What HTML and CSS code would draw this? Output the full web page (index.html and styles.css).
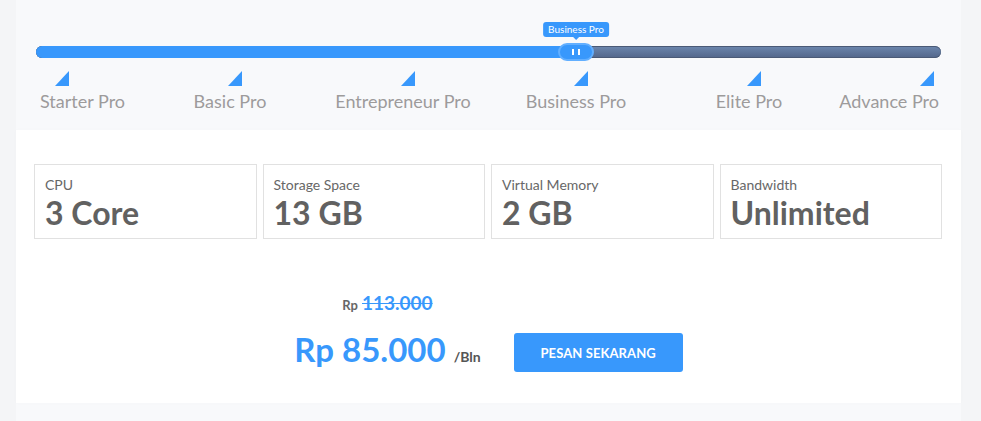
FILE: index.html
```html
<!DOCTYPE html>
<html lang="id">
<head>
<meta charset="utf-8">
<title>Paket Hosting</title>
<link rel="stylesheet" href="styles.css">
</head>
<body>
<div class="wrap">
  <section class="slider">
    <div class="track">
      <div class="fill" style="width: 59.67%"></div>
      <div class="thumb" style="left: 59.67%">
        <div class="tip">Business Pro</div>
        <div class="handle"><i></i><i></i></div>
      </div>
    </div>
    <div class="ticks">
      <span class="tri"></span><span class="tri"></span><span class="tri"></span>
      <span class="tri"></span><span class="tri"></span><span class="tri"></span>
    </div>
    <div class="labels">
      <span class="lbl first"><b>Starter Pro</b></span>
      <span class="lbl"><b>Basic Pro</b></span>
      <span class="lbl"><b>Entrepreneur Pro</b></span>
      <span class="lbl"><b>Business Pro</b></span>
      <span class="lbl"><b>Elite Pro</b></span>
      <span class="lbl last"><b>Advance Pro</b></span>
    </div>
  </section>

  <section class="card">
    <div class="specs">
      <div class="spec"><div class="spec-name">CPU</div><div class="spec-val">3 Core</div></div>
      <div class="spec"><div class="spec-name">Storage Space</div><div class="spec-val">13 GB</div></div>
      <div class="spec"><div class="spec-name">Virtual Memory</div><div class="spec-val">2 GB</div></div>
      <div class="spec"><div class="spec-name">Bandwidth</div><div class="spec-val">Unlimited</div></div>
    </div>
    <div class="order">
      <div class="price">
        <div class="old"><span class="old-cur">Rp</span><s>113.000</s></div>
        <div class="new"><span class="amount">Rp 85.000</span><span class="per">/Bln</span></div>
      </div>
      <a class="btn" href="#">PESAN SEKARANG</a>
    </div>
  </section>
</div>
</body>
</html>
```

FILE: styles.css
```css
* { box-sizing: border-box; }

html, body {
  margin: 0;
  padding: 0;
}

body {
  background: #f4f5f7;
  font-family: Lato, "Liberation Sans", sans-serif;
  width: 981px;
  height: 421px;
  overflow: hidden;
}

.wrap {
  margin-left: 16px;
  width: 945px;
  background: #f8f9fb;
  height: 421px;
}

/* ---------- slider ---------- */
.slider {
  padding: 46px 20px 18px;
  height: 130px;
}

.track {
  position: relative;
  height: 12px;
  border-radius: 6px;
  background: linear-gradient(#6c87ae, #53668a);
  box-shadow: inset 0 1px 0 #4a5a76, inset 0 -1px 0 #4a5a76;
}

.fill {
  height: 12px;
  background: #3898fc;
  border-radius: 6px 0 0 6px;
}

.thumb {
  position: absolute;
  top: -3px;
  transform: translateX(-50%);
  width: 36px;
  height: 18px;
}

.handle {
  width: 36px;
  height: 18px;
  border-radius: 9px;
  background: #3898fc;
  border: 2px solid #62afff;
  display: flex;
  justify-content: center;
  align-items: center;
  gap: 4px;
}

.handle i {
  display: block;
  width: 2px;
  height: 6px;
  background: #fff;
}

.tip {
  position: absolute;
  bottom: 24px;
  left: 50%;
  transform: translateX(-50%);
  background: #3898fc;
  color: #fff;
  font-size: 10px;
  line-height: 15px;
  height: 15px;
  padding: 0 5px;
  border-radius: 3px;
  white-space: nowrap;
}

.tip::after {
  content: "";
  position: absolute;
  left: 50%;
  top: 100%;
  margin-left: -3px;
  border: 3px solid transparent;
  border-top-color: #3898fc;
}

.ticks {
  display: flex;
  justify-content: space-between;
  margin-top: 13px;
  padding: 0 7px 0 19px;
}

.tri {
  width: 14px;
  height: 15px;
  background: #3898fc;
  clip-path: polygon(100% 0, 100% 100%, 0 100%);
}

.labels {
  display: flex;
  justify-content: space-between;
  margin-top: 4px;
  padding: 0 19px 0 21px;
  height: 22px;
}

.lbl {
  width: 0;
  display: flex;
  justify-content: center;
}

.lbl b {
  font-weight: 400;
  font-size: 18px;
  line-height: 22px;
  color: #9d9b9b;
  white-space: nowrap;
}

.lbl.first { justify-content: flex-start; }
.lbl.first b { margin-left: -17px; }
.lbl.last { justify-content: flex-end; }
.lbl.last b { margin-right: -17px; }

/* ---------- card ---------- */
.card {
  background: #fff;
  padding: 34px 18px 31px;
  box-shadow: 0 0 6px rgba(0, 0, 0, 0.015);
}

.specs {
  display: grid;
  grid-template-columns: repeat(4, 1fr);
  gap: 6px;
  margin-right: 1px;
}

.spec {
  border: 1px solid #e1e1e1;
  padding: 12px 10px 6px;
}

.spec-name {
  font-size: 14px;
  line-height: 15px;
  color: #676767;
}

.spec-val {
  margin-top: 2px;
  font-size: 32px;
  line-height: 38px;
  font-weight: 700;
  color: #616161;
}

.order {
  margin-top: 52px;
  display: flex;
  justify-content: center;
  align-items: flex-end;
  gap: 33px;
}

.price {
  display: flex;
  flex-direction: column;
  align-items: center;
  margin-bottom: 3px;
}

.old {
  display: flex;
  align-items: baseline;
  gap: 4px;
  height: 24px;
  line-height: 24px;
  margin-bottom: 14px;
}

.old-cur {
  font-size: 13px;
  font-weight: 700;
  color: #666;
}

.old s {
  font-size: 19px;
  font-weight: 700;
  color: #3898fc;
}

.new {
  display: flex;
  align-items: baseline;
  gap: 8px;
  height: 40px;
  line-height: 40px;
}

.amount {
  font-size: 33px;
  font-weight: 700;
  color: #3898fc;
}

.per {
  font-size: 14px;
  font-weight: 700;
  color: #555;
}

.btn {
  display: flex;
  align-items: center;
  justify-content: center;
  width: 169px;
  height: 39px;
  background: #3898fc;
  color: #fff;
  border-radius: 3px;
  font-size: 13px;
  font-weight: 700;
  text-decoration: none;
  letter-spacing: 0.1px;
}
```
